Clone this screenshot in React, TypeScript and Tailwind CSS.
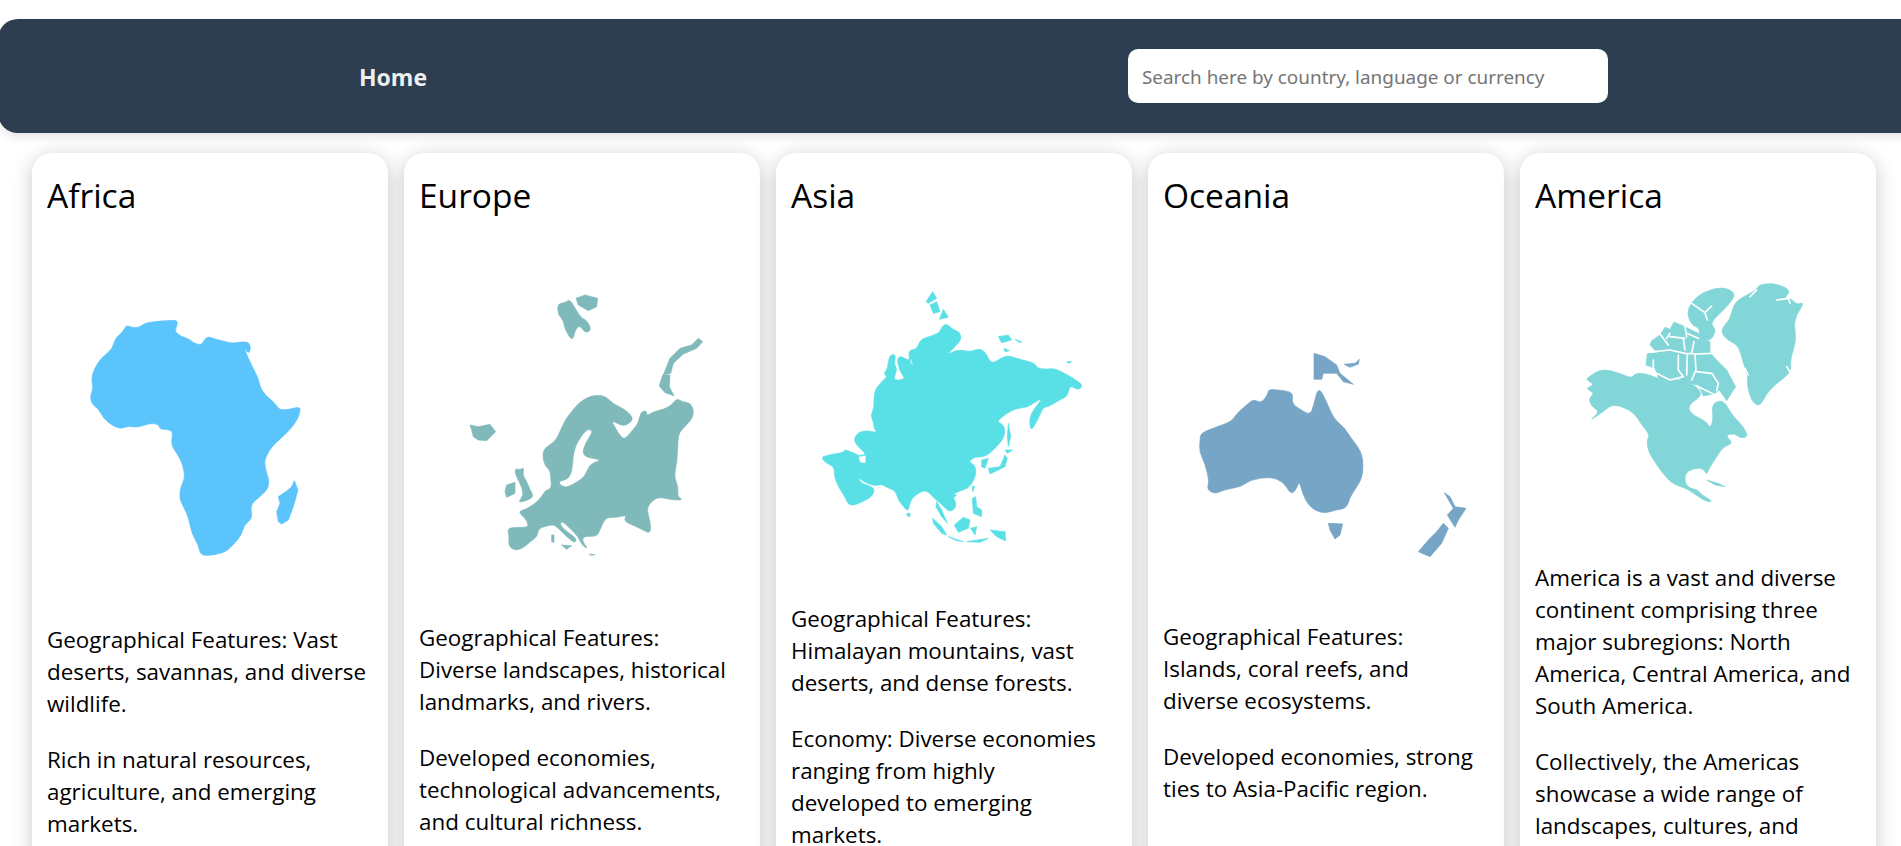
const africa = "M198,105 215,112 235,113 250,103 262,98 300,93 330,92 350,90 353,103 343,125 365,140 390,148 398,158 425,166 432,150 445,139 465,147 495,155 520,160 545,155 568,157 572,178 565,192 550,170 565,205 582,240 595,265 600,290 615,315 640,335 652,350 660,360 690,358 722,349 718,375 705,400 680,430 645,460 625,485 612,515 620,550 627,570 625,595 600,620 570,645 578,685 552,705 545,735 515,770 490,790 435,798 420,790 415,765 395,730 385,680 370,650 358,625 362,590 375,565 370,530 355,495 332,465 340,425 322,418 300,418 295,402 270,400 230,413 205,408 180,417 155,405 130,385 115,355 97,345 90,320 100,295 93,258 115,215 135,195 158,175 165,145 190,125Z M703,572 714,600 700,650 685,690 665,702 655,695 650,665 660,640 655,620 680,603 695,590Z";

const europe = "M322,72 345,68 360,58 378,90 395,115 410,120 425,150 405,160 390,135 375,150 368,185 345,150 340,120 325,105Z M378,55 405,45 443,55 440,80 415,92 385,75Z M745,175 758,185 740,205 700,222 670,250 662,280 640,285 650,260 660,235 690,205 725,195Z M638,285 660,285 658,320 672,347 645,338 628,318Z M60,435 85,440 120,433 137,455 110,482 85,480 70,470 65,450Z M170,615 195,607 195,640 170,652 165,635Z M195,565 210,570 222,562 218,585 228,600 240,630 252,650 230,662 203,668 222,645 212,615 205,600 197,585Z M172,745 200,742 235,742 232,725 222,712 205,695 225,688 240,680 258,668 275,650 285,632 305,625 302,590 300,570 285,558 278,530 282,505 315,485 330,455 345,420 365,395 385,370 415,350 445,345 468,350 490,372 520,385 548,410 545,425 520,440 483,420 497,445 512,470 525,478 550,448 565,430 572,395 590,392 590,408 610,395 640,388 665,375 680,355 695,365 725,370 733,408 705,440 685,460 683,510 680,550 672,590 685,620 682,650 700,660 665,660 625,650 600,668 590,690 600,720 603,763 570,745 535,730 522,720 530,705 500,712 485,712 465,715 450,750 440,770 405,768 395,780 415,808 395,795 385,770 360,745 335,722 330,735 350,755 380,775 375,790 350,770 325,745 310,733 290,738 265,745 262,770 240,785 225,800 198,813 175,798 178,770Z M415,445 430,455 405,490 395,530 460,540 420,550 405,590 375,610 345,625 320,605 365,595 370,510 395,465Z M305,765 312,765 312,787 305,785Z M335,795 365,797 350,808Z M418,822 435,824 422,826Z";

const asia = "M378,65 398,35 410,55 385,70Z M390,75 410,65 420,95 400,100Z M418,118 430,88 445,112Z M595,170 625,165 635,180 605,188Z M645,178 665,185 660,188Z M612,205 628,212 615,215Z M800,245 815,245 805,250Z M65,532 75,528 100,522 130,518 135,508 150,515 165,520 178,528 198,522 185,510 165,490 163,472 178,455 205,452 232,458 222,445 220,425 212,405 222,385 222,340 232,320 250,300 262,290 250,280 262,270 268,225 288,222 282,255 292,265 280,300 300,300 315,295 300,275 290,235 305,228 320,240 335,235 340,262 328,240 326,210 350,208 360,180 385,170 418,160 425,140 440,130 460,150 478,155 485,178 465,200 440,225 470,210 495,212 515,215 535,205 555,215 565,235 575,250 595,240 620,225 650,235 680,243 705,250 712,265 740,268 760,265 785,275 820,295 850,315 835,332 810,315 803,345 795,352 770,365 745,380 730,382 722,400 710,425 692,455 688,415 700,390 730,352 700,370 680,382 650,385 620,400 590,425 605,430 615,445 612,475 585,505 570,520 548,532 525,530 505,545 525,555 528,580 522,600 505,625 480,632 455,645 470,670 462,690 445,695 425,672 402,655 378,628 345,645 330,665 325,695 310,680 295,660 285,630 265,625 245,612 225,618 195,608 172,590 185,612 225,622 218,648 190,665 148,680 135,650 115,620 103,590 103,560 75,548Z M175,530 198,525 197,550 180,548Z M410,665 425,690 442,730 425,710 408,680Z M398,715 425,740 440,765 425,760 400,730Z M463,735 490,712 510,720 505,745 475,757Z M445,770 490,785 470,782Z M512,745 530,740 525,765Z M570,750 615,755 617,783 590,770Z M500,785 565,775 540,787Z M517,655 527,650 530,680 545,690 545,710 520,700Z M517,618 524,620 518,635Z M320,700 330,700 330,710 322,708Z M458,642 470,645 462,652Z M625,430 632,470 625,500 622,470Z M615,510 638,510 622,520Z M565,565 600,560 615,525 622,535 615,560 570,582Z M545,540 565,535 555,565 545,560Z";

const oceania = "M402,40 435,50 470,75 480,100 520,133 490,125 470,100 430,100 425,118 402,118Z M492,73 525,70 538,58 535,72 510,82Z M62,280 105,262 155,245 170,220 200,195 220,177 245,190 265,160 265,148 300,150 340,157 335,190 360,208 390,225 400,200 415,138 440,185 460,235 495,265 510,290 545,335 550,380 545,420 510,470 500,505 465,510 435,520 400,510 375,480 362,440 358,425 345,455 330,460 310,425 270,410 210,420 185,440 130,450 105,462 80,448 88,425 75,370 58,335 60,300Z M445,550 488,552 480,585 465,597 450,570Z M793,458 810,470 825,500 858,505 835,540 825,562 802,525 820,505Z M790,550 805,565 785,610 750,650 715,635 745,600 770,575Z";

const america = "M510,85 560,60 565,45 610,38 665,60 640,88 665,85 680,105 705,95 670,150 680,210 660,270 665,305 615,345 590,370 570,410 545,395 530,340 535,320 520,280 505,225 470,210 450,180 480,150 490,105Z M400,65 460,50 498,70 480,100 455,125 420,160 440,180 420,215 385,205 390,175 365,165 350,130 365,95Z M50,325 95,295 150,310 185,325 195,310 225,310 265,325 300,345 325,325 345,340 375,345 395,370 385,385 355,405 360,430 410,455 420,475 430,450 425,400 460,390 480,425 500,450 520,470 535,500 510,505 495,490 465,495 490,520 460,530 440,560 415,600 410,615 400,595 370,595 345,610 345,640 360,655 385,660 395,675 430,695 410,695 385,680 350,655 315,645 290,625 260,585 235,545 230,510 240,495 215,465 190,425 130,400 100,425 55,455 90,425 65,410 55,385 75,370 45,355 75,345 50,330Z M410,630 445,640 465,650 435,645Z";

// Arctic archipelago keeps its angular outline: white channels are cut across it.
const americaRaw = "M228,285 232,250 262,248 240,225 245,212 270,195 285,172 300,178 312,156 345,170 385,190 390,205 420,215 420,245 432,262 455,285 470,300 497,350 470,392 448,360 432,372 400,378 385,345 345,340 325,325 300,345 265,325 255,295Z";

const americaChannels = "M232,247 300,240 345,250 380,252 425,250 M270,192 295,225 M300,190 290,205 M345,205 300,200 M340,205 345,240 M372,215 365,250 M345,170 350,200 M385,205 350,190 M250,270 250,300 M250,305 300,330 340,320 M325,255 325,300 340,320 M352,255 350,315 M375,255 378,300 365,330 M378,305 425,310 445,340 440,362 M385,350 430,372 M365,100 405,128 425,108 M405,128 412,150 M620,90 655,85 660,100 M560,60 540,80 M525,295 535,315 M650,290 660,305";

// Rounds the corners of long coastlines so they read as organic outlines rather than straight facets.
function smooth(d: string) {
  return d
    .split("Z")
    .map((s) => s.replace("M", "").trim())
    .filter(Boolean)
    .map((s) => {
      const pts = s.split(" ").map((p) => p.split(",").map(Number));
      if (pts.length < 12) return `M${s}Z`;
      const n = pts.length;
      const mid = (a: number[], b: number[]) => [(a[0] + b[0]) / 2, (a[1] + b[1]) / 2];
      const start = mid(pts[n - 1], pts[0]);
      let out = `M${start[0]},${start[1]}`;
      pts.forEach((p, i) => {
        const m = mid(p, pts[(i + 1) % n]);
        out += ` Q${p[0]},${p[1]} ${m[0]},${m[1]}`;
      });
      return out + "Z";
    })
    .join(" ");
}

const cards = [
  { title: "Africa", d: africa, fill: "#5bc4fb", vb: "-39 -204 978 1206", h: "h-[402px]", paras: ["Geographical Features: Vast\ndeserts, savannas, and diverse\nwildlife.", "Rich in natural resources,\nagriculture, and emerging\nmarkets."] },
  { title: "Europe", d: europe, fill: "#7fb9ba", vb: "-93 -174 978 1200", h: "h-[400px]", paras: ["Geographical Features:\nDiverse landscapes, historical\nlandmarks, and rivers.", "Developed economies,\ntechnological advancements,\nand cultural richness."] },
  { title: "Asia", d: asia, fill: "#59e0e6", vb: "-27 -174 978 1143", h: "h-[381px]", paras: ["Geographical Features:\nHimalayan mountains, vast\ndeserts, and dense forests.", "Economy: Diverse economies\nranging from highly\ndeveloped to emerging\nmarkets."] },
  { title: "Oceania", d: oceania, fill: "#76a5c6", vb: "-51 -354 978 1197", h: "h-[399px]", paras: ["Geographical Features:\nIslands, coral reefs, and\ndiverse ecosystems.", "Developed economies, strong\nties to Asia-Pacific region."] },
  { title: "America", d: america, raw: americaRaw, channels: americaChannels, fill: "#82d6d8", vb: "-105 -144 978 1020", h: "h-[340px]", paras: ["America is a vast and diverse\ncontinent comprising three\nmajor subregions: North\nAmerica, Central America, and\nSouth America.", "Collectively, the Americas\nshowcase a wide range of\nlandscapes, cultures, and"] },
];

export default function App() {
  return (
    <div className="h-screen overflow-hidden bg-white font-['Open_Sans',sans-serif] text-black">
      <nav className="-ml-[2px] mt-[19px] flex h-[114px] w-[2000px] items-center rounded-[20px] bg-[#2c3e50] pl-[361px] shadow-[0_4px_8px_rgba(0,0,0,0.1)]">
        <a className="mt-[2px] w-[69px] text-[23px] font-bold leading-none text-[#ecf0f1]">Home</a>
        <input
          className="ml-[700px] h-[54px] w-[480px] rounded-[10px] bg-white px-[14px] pt-[2px] font-['Noto_Sans',sans-serif] text-[18.9px] outline-none placeholder:text-[#757575]"
          placeholder="Search here by country, language or currency"
        />
      </nav>
      <main className="ml-[32px] mt-[20px] flex gap-[16px]">
        {cards.map((c) => (
          <section key={c.title} className="h-[900px] w-[356px] shrink-0 rounded-[20px] bg-white p-[15px] shadow-[0_4px_20px_rgba(0,0,0,0.22)]">
            <h2 className="h-[54px] text-[33.5px] leading-[54px]">{c.title}</h2>
            <svg viewBox={c.vb} className={`block w-[326px] ${c.h}`} preserveAspectRatio="none">
              <path d={smooth(c.d)} fill={c.fill} stroke={c.fill} strokeWidth="2" strokeLinejoin="round" fillRule="evenodd" />
              {c.raw && <path d={c.raw} fill={c.fill} stroke={c.fill} strokeWidth="2" strokeLinejoin="round" />}
              {c.channels && <path d={c.channels} fill="none" stroke="#ffffff" strokeWidth="5" strokeLinecap="round" strokeLinejoin="round" />}
            </svg>
            {c.paras.map((p) => (
              <p key={p} className="mb-[24px] whitespace-pre text-[22.4px] leading-[32px]">{p}</p>
            ))}
          </section>
        ))}
      </main>
    </div>
  );
}
